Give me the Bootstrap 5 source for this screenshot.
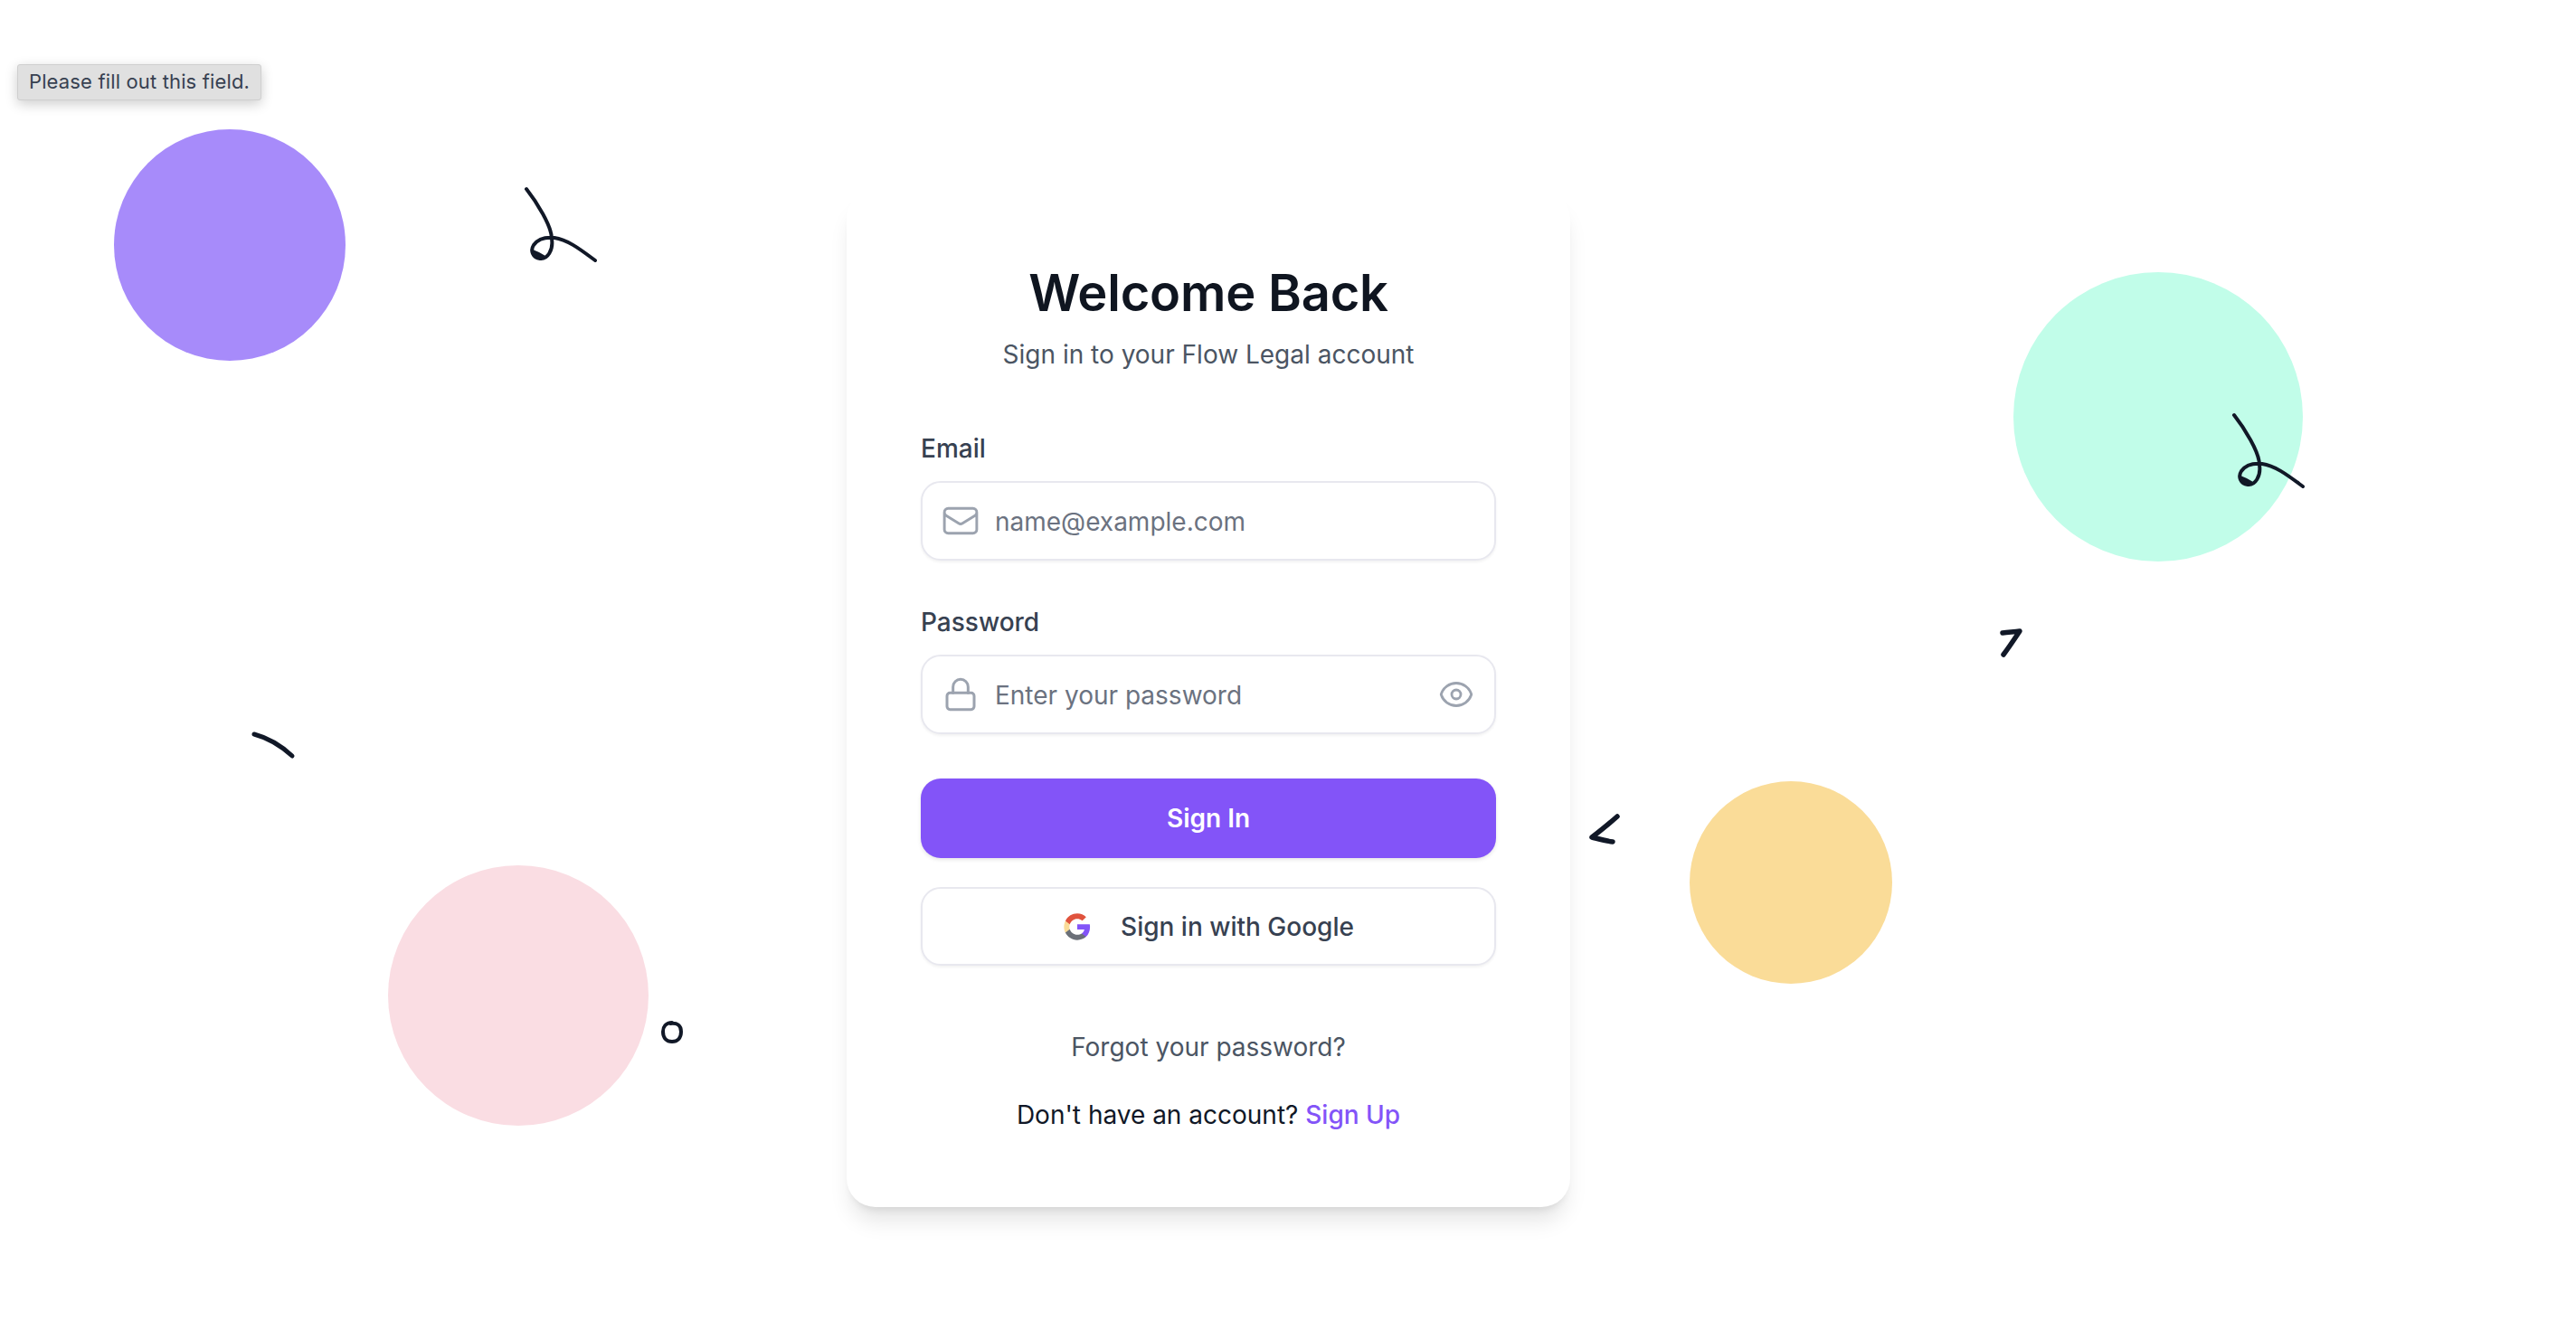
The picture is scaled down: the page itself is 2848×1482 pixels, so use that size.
<!DOCTYPE html>
<html lang="en">
<head>
<meta charset="utf-8">
<title>Sign in</title>
<link href="https://cdn.jsdelivr.net/npm/bootstrap@5.3.0/dist/css/bootstrap.min.css" rel="stylesheet">
<style>
html,body{height:100%}
body{background:#fff;font-family:Inter,"Liberation Sans",sans-serif;color:#111827;overflow:hidden;position:relative;height:1482px}
.blob{position:absolute;border-radius:50%}
.blob-purple{left:126px;top:143px;width:256px;height:256px;background:#a78bfa}
.blob-mint{left:2226px;top:301px;width:320px;height:320px;background:#c1fde9}
.blob-yellow{left:1868px;top:864px;width:224px;height:224px;background:#fadc98}
.blob-pink{left:429px;top:957px;width:288px;height:288px;background:#fadde3}
.scribbles{position:absolute;left:0;top:0;width:2848px;height:1482px}
.tip{position:absolute;left:19px;top:71px;width:270px;height:40px;background:#e0e0e0;border:1px solid #cfcfcf;border-radius:3px;box-shadow:0 4px 14px rgba(0,0,0,.2);color:#374151;font-size:22px;letter-spacing:.15px;line-height:36px;text-align:center;white-space:nowrap}
.stage{position:relative;padding:210px 0 0 936px}
.login{width:800px;height:1125px;border:0;border-radius:32px;box-shadow:0 20px 25px -5px rgba(0,0,0,.1),0 8px 10px -6px rgba(0,0,0,.1);padding:0 82px}
.login h1{font-size:56px;font-weight:600;letter-spacing:-.2px;line-height:68px;color:#0f1520;margin:80px 0 0;text-align:center}
.sub{font-size:28px;line-height:40px;color:#4b5563;text-align:center;margin:14px 0 0}
.flabel{display:block;font-size:28px;line-height:40px;font-weight:450;color:#374151;margin:0 0 16px}
.email-label{margin-top:64px}
.pass-label{margin-top:48px}
.field{height:88px;border:2px solid #e8e8ef;border-radius:22px;box-shadow:0 2px 3px rgba(0,0,0,.05);padding:0 22px 0 20px;gap:16px;background:#fff}
.field svg{flex:none}
.field .form-control{border:0;padding:2px 0 0;box-shadow:none;font-size:28px;color:#111827;background:transparent;height:60px;border-radius:0;font-family:inherit}
.field .form-control::placeholder{color:#6b7280;opacity:1}
.primary-go{height:88px;width:100%;margin-top:49px;background:#8354f8;border:0;border-radius:22px;color:#fff;font-size:28px;font-weight:600;box-shadow:0 2px 4px rgba(0,0,0,.1)}
.primary-go:hover{background:#8354f8;color:#fff}
.google-go{height:87px;width:100%;margin-top:32px;background:#fff;border:2px solid #e8e8ef;border-radius:22px;color:#374151;font-size:28px;font-weight:500;box-shadow:0 2px 3px rgba(0,0,0,.05);gap:32px}
.forgot{display:block;text-align:center;font-size:28px;line-height:40px;color:#4b5563;text-decoration:none;margin-top:70px}
.signup{text-align:center;font-size:28px;line-height:40px;color:#111827;margin:35px 0 0}
.signup a{color:#8354f8;font-weight:500;text-decoration:none}
</style>
</head>
<body>
<div class="blob blob-purple"></div>
<div class="blob blob-mint"></div>
<div class="blob blob-yellow"></div>
<div class="blob blob-pink"></div>
<svg class="scribbles" viewBox="0 0 2848 1482" fill="none" stroke="#111827" stroke-linecap="round" stroke-linejoin="round">
  <defs>
    <g id="hook">
      <path stroke-width="4" d="M2469 459C2480 473 2497 500 2497 514C2499 527 2492 537 2484 536C2476 535 2473 527 2477 521C2482 514 2490 512 2500 513C2515 515 2530 527 2545 538"/>
      <path fill="#111827" stroke="none" d="M2476 526L2483 529L2490 533L2485 537L2478 534Z"/>
    </g>
  </defs>
  <use href="#hook" transform="translate(1 0)"/>
  <use href="#hook" transform="translate(-1887 -250)"/>
  <path stroke-width="5.5" d="M2214 700C2221 699 2227 699 2233 698C2227 707 2221 716 2215 724"/>
  <path stroke-width="5.5" d="M1788 903C1779 911 1769 919 1760 926C1768 928 1775 930 1783 931"/>
  <path stroke-width="5" d="M281 812C296 816 310 824 323 836"/>
  <path stroke-width="4" d="M743 1131C736 1131 733 1136 733 1141C733 1148 737 1152 743 1152C749 1152 753 1148 753 1141C753 1134 749 1131 741 1132"/>
</svg>
<div class="tip">Please fill out this field.</div>
<main class="stage">
  <form class="card login" onsubmit="return false">
    <h1>Welcome Back</h1>
    <p class="sub">Sign in to your Flow Legal account</p>
    <label class="flabel email-label" for="em">Email</label>
    <div class="field d-flex align-items-center">
      <svg width="44" height="44" viewBox="0 0 24 24" fill="none" stroke="#9ca3af" stroke-width="1.6" stroke-linecap="round" stroke-linejoin="round"><path d="M21.75 6.75v10.5a2.25 2.25 0 0 1-2.25 2.25h-15a2.25 2.25 0 0 1-2.25-2.25V6.75m19.5 0A2.25 2.25 0 0 0 19.5 4.5h-15a2.25 2.25 0 0 0-2.25 2.25m19.5 0v.243a2.25 2.25 0 0 1-1.07 1.916l-7.5 4.615a2.25 2.25 0 0 1-2.36 0L3.32 8.91a2.25 2.25 0 0 1-1.07-1.916V6.75"/></svg>
      <input id="em" class="form-control" type="email" placeholder="name@example.com">
    </div>
    <label class="flabel pass-label" for="pw">Password</label>
    <div class="field d-flex align-items-center">
      <svg width="44" height="44" viewBox="-1.2 -1.2 26.4 26.4" fill="none" stroke="#9ca3af" stroke-width="1.8" stroke-linecap="round" stroke-linejoin="round"><rect x="3" y="11" width="18" height="11" rx="2"/><path d="M7 11V7a5 5 0 0 1 10 0v4"/></svg>
      <input id="pw" class="form-control" type="password" placeholder="Enter your password">
      <svg width="40" height="40" viewBox="0 0 24 24" fill="none" stroke="#9ca3af" stroke-width="1.7" stroke-linecap="round" stroke-linejoin="round"><path d="M2.036 12.322a1.012 1.012 0 0 1 0-.639C3.423 7.51 7.36 4.5 12 4.5c4.638 0 8.573 3.007 9.963 7.178.07.207.07.431 0 .639C20.577 16.49 16.64 19.5 12 19.5c-4.638 0-8.573-3.007-9.963-7.178Z"/><path d="M15 12a3 3 0 1 1-6 0 3 3 0 0 1 6 0Z"/></svg>
    </div>
    <button class="btn primary-go" type="submit">Sign In</button>
    <button class="btn google-go d-flex align-items-center justify-content-center" type="button">
      <svg width="32" height="32" viewBox="0 0 24 24"><path fill="#8354f8" d="M22.56 12.25c0-.78-.07-1.53-.2-2.25H12v4.26h5.92c-.26 1.37-1.04 2.53-2.21 3.31v2.77h3.57c2.08-1.92 3.28-4.74 3.28-8.09z"/><path fill="#6b7078" d="M12 23c2.97 0 5.46-.98 7.28-2.66l-3.57-2.77c-.98.66-2.23 1.06-3.71 1.06-2.86 0-5.29-1.93-6.16-4.53H2.18v2.84C3.99 20.53 7.7 23 12 23z"/><path fill="#fadc98" d="M5.84 14.09c-.22-.66-.35-1.36-.35-2.09s.13-1.43.35-2.09V7.07H2.18C1.43 8.55 1 10.22 1 12s.43 3.45 1.18 4.93l2.85-2.22.81-.62z"/><path fill="#e0533d" d="M12 5.38c1.62 0 3.06.56 4.21 1.64l3.15-3.15C17.45 2.09 14.97 1 12 1 7.7 1 3.99 3.47 2.18 7.07l3.66 2.84c.87-2.6 3.3-4.53 6.16-4.53z"/></svg>
      <span>Sign in with Google</span>
    </button>
    <a class="forgot" href="#">Forgot your password?</a>
    <p class="signup">Don't have an account? <a href="#">Sign Up</a></p>
  </form>
</main>
<script src="https://cdn.jsdelivr.net/npm/bootstrap@5.3.0/dist/js/bootstrap.bundle.min.js"></script>
</body>
</html>
